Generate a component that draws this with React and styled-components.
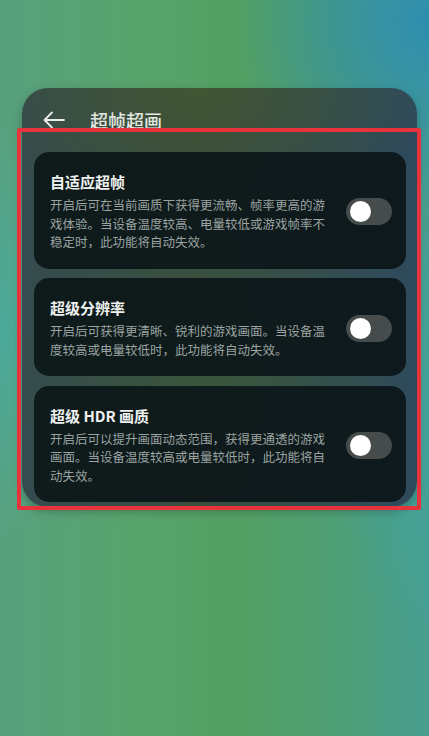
import React from "react"
import styled, { createGlobalStyle } from "styled-components"

const GlobalStyle = createGlobalStyle`
  html, body {
    margin: 0;
    padding: 0;
  }
  body {
    font-family: "Noto Sans CJK SC", "Noto Sans", sans-serif;
  }
`

const items = [
  {
    title: "自适应超帧",
    text: "开启后可在当前画质下获得更流畅、帧率更高的游戏体验。当设备温度较高、电量较低或游戏帧率不稳定时，此功能将自动失效。",
  },
  {
    title: "超级分辨率",
    text: "开启后可获得更清晰、锐利的游戏画面。当设备温度较高或电量较低时，此功能将自动失效。",
  },
  {
    title: "超级 HDR 画质",
    text: "开启后可以提升画面动态范围，获得更通透的游戏画面。当设备温度较高或电量较低时，此功能将自动失效。",
  },
]

const App = () => {
  return (
    <Screen>
      <GlobalStyle />
      <Panel>
        <Header>
          <BackArrow viewBox="0 0 24 24">
            <path d="M22 12H3M10 4.5L2.5 12L10 19.5" />
          </BackArrow>
          <Title>超帧超画</Title>
        </Header>
        <CardList>
          {items.map((item) => (
            <Card key={item.title}>
              <CardText>
                <CardTitle>{item.title}</CardTitle>
                <CardDesc>{item.text}</CardDesc>
              </CardText>
              <Toggle>
                <Knob />
              </Toggle>
            </Card>
          ))}
        </CardList>
      </Panel>
      <Highlight />
    </Screen>
  )
}

const Screen = styled.div`
  position: relative;
  width: 429px;
  height: 736px;
  overflow: hidden;
  padding-top: 88px;
  box-sizing: border-box;
  background:
    radial-gradient(ellipse 45% 25% at 100% 3%, rgba(44, 140, 178, 0.9), transparent 100%),
    radial-gradient(ellipse 18% 28% at 0% 45%, rgba(72, 172, 162, 0.8), transparent 100%),
    radial-gradient(ellipse 22% 30% at 100% 58%, rgba(64, 164, 160, 0.7), transparent 100%),
    linear-gradient(to right, #58a07e 0%, #58a36c 30%, #53a062 55%, #4d9e76 80%, #489e90 100%);
`

const Panel = styled.div`
  margin-left: 22px;
  width: 395px;
  border-radius: 26px;
  padding: 0 11px 5px 12px;
  box-sizing: border-box;
  background:
    radial-gradient(ellipse 60% 30% at 45% 0%, rgba(72, 92, 40, 0.55), transparent 100%),
    radial-gradient(ellipse 50% 40% at 50% 70%, rgba(60, 100, 50, 0.4), transparent 100%),
    linear-gradient(to right, #354b4e, #394c40 45%, #2e4a5c);
  box-shadow: 0 4px 8px rgba(20, 40, 40, 0.35);
`

const Header = styled.div`
  height: 64px;
  display: flex;
  align-items: center;
  gap: 24px;
  padding-left: 8px;
`

const BackArrow = styled.svg`
  width: 24px;
  height: 24px;
  fill: none;
  stroke: #e8ecea;
  stroke-width: 1.8;
  stroke-linecap: round;
  stroke-linejoin: round;
`

const Title = styled.div`
  color: #e4e8e4;
  font-size: 18px;
  font-weight: 500;
  line-height: 24px;
`

const CardList = styled.div`
  display: flex;
  flex-direction: column;
  gap: 9.5px;
`

const Card = styled.div`
  display: flex;
  align-items: center;
  gap: 20px;
  padding: 20px 14px 17px 16px;
  border-radius: 15px;
  background: linear-gradient(to right, rgba(12, 24, 24, 0.94), rgba(12, 22, 26, 0.94));
`

const CardText = styled.div`
  width: 276px;
  display: flex;
  flex-direction: column;
  gap: 4px;
`

const CardTitle = styled.div`
  color: #eef1ef;
  font-size: 15px;
  font-weight: 700;
  line-height: 20px;
`

const CardDesc = styled.div`
  color: #9aa3a1;
  font-size: 12.5px;
  line-height: 18.5px;
`

const Toggle = styled.div`
  flex: none;
  width: 46px;
  height: 27px;
  border-radius: 14px;
  background: #454c4b;
  display: flex;
  align-items: center;
  padding-left: 4px;
  box-sizing: border-box;
`

const Knob = styled.div`
  width: 21px;
  height: 21px;
  border-radius: 50%;
  background: #ffffff;
`

const Highlight = styled.div`
  position: absolute;
  left: 17px;
  top: 128px;
  width: 404px;
  height: 382px;
  box-sizing: border-box;
  border: 4px solid #e8323c;
  border-radius: 2px;
  pointer-events: none;
`

export default App
